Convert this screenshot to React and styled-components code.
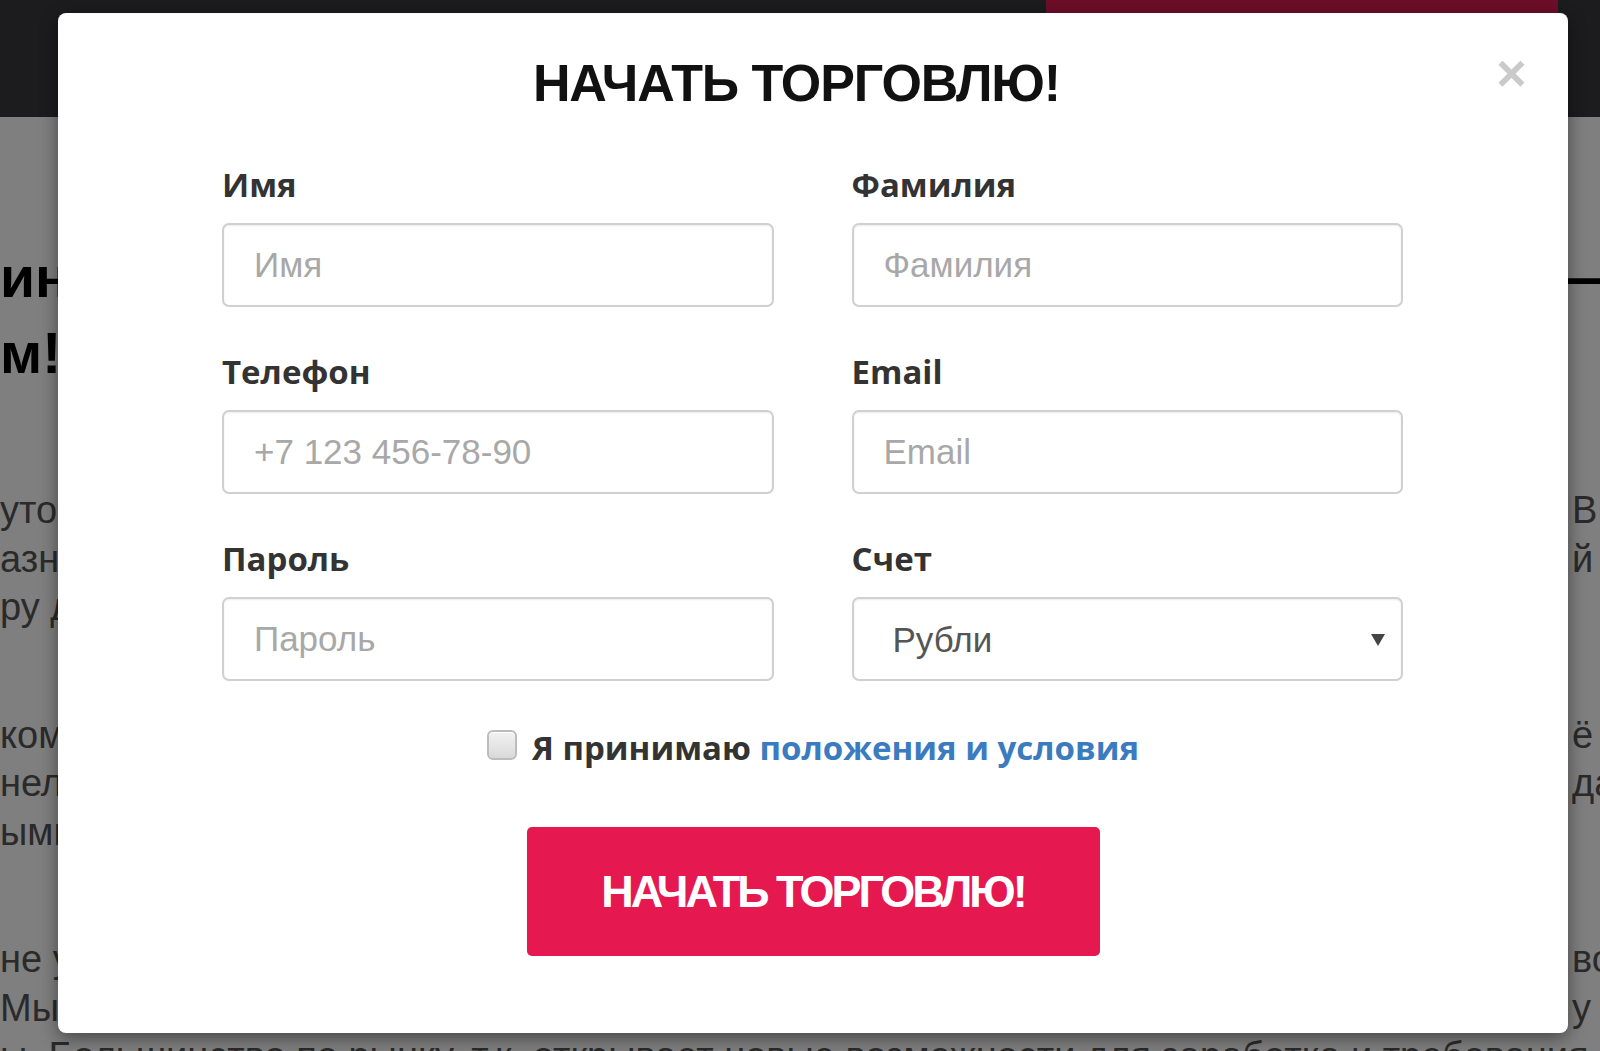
import React from "react";
import styled, { createGlobalStyle } from "styled-components";

const GlobalStyle = createGlobalStyle`
  html, body { margin: 0; padding: 0; }
  body {
    width: 1600px;
    height: 1051px;
    overflow: hidden;
    background: #fff;
    font-family: "Liberation Sans", Arial, sans-serif;
  }
  * { box-sizing: border-box; }
`;

const Page = styled.div`
  position: relative;
  width: 1600px;
  height: 1051px;
  overflow: hidden;
  background: #fff;
`;

const SiteHeader = styled.header`
  height: 117px;
  background: #38383d;
  display: flex;
  justify-content: flex-end;
  align-items: flex-start;
  padding-right: 42px;
`;

const HeaderCta = styled.div`
  width: 512px;
  height: 72px;
  background: #dc1d52;
`;

const SiteMain = styled.main`
  padding-top: 122px;
  display: flex;
  flex-direction: column;
`;

const Heading = styled.h1`
  margin: 0 0 95px;
  font: 700 57px/76px "Liberation Sans", Arial, sans-serif;
  color: #000;
`;

const Paragraph = styled.p`
  margin: 0 0 79px;
  font: 400 38px/48.5px "Liberation Sans", Arial, sans-serif;
  color: #555;
`;

const BgLine = styled.span`
  display: grid;
  grid-template-columns: ${(p) => p.$split || 1570}px 1fr;
  white-space: nowrap;
  overflow: hidden;
`;

const Backdrop = styled.div`
  position: absolute;
  inset: 0;
  background: rgba(0, 0, 0, 0.5);
`;

const Modal = styled.div`
  position: absolute;
  top: 13px;
  left: 58px;
  width: 1510px;
  background: #fff;
  border-radius: 8px;
  box-shadow: 0 5px 18px rgba(0, 0, 0, 0.45);
  padding: 40px 40px 77px;
  display: flex;
  flex-direction: column;
`;

const ModalHeader = styled.div`
  display: flex;
  align-items: flex-start;
`;

const Title = styled.h2`
  flex: 1;
  margin: 0;
  text-align: center;
  font: 700 52px/60px "Liberation Sans", Arial, sans-serif;
  letter-spacing: -1.1px;
  color: #111;
`;

const CloseButton = styled.button`
  width: 33px;
  margin-top: -5px;
  padding: 0;
  border: 0;
  background: none;
  font: 700 52px/50px "Liberation Sans", Arial, sans-serif;
  color: #cacaca;
  cursor: pointer;
`;

const FormGrid = styled.div`
  margin-top: 52px;
  padding: 0 125px 0 124px;
  display: grid;
  grid-template-columns: 1fr 1fr;
  column-gap: 78px;
  row-gap: 45px;
`;

const Field = styled.label`
  display: flex;
  flex-direction: column;
  gap: 18px;
`;

const FieldLabel = styled.span`
  font: 700 33px/40px "Open Sans", "Liberation Sans", sans-serif;
  color: #333;
`;

const TextInput = styled.input`
  width: 100%;
  height: 84px;
  margin: 0;
  border: 2px solid #d0d0d0;
  border-radius: 7px;
  padding: 0 30px;
  font: 400 35px "Liberation Sans", Arial, sans-serif;
  color: #555;
  background: #fff;
  box-shadow: inset 0 1px 2px rgba(0, 0, 0, 0.08);
  outline: none;
  &::placeholder {
    color: #a8a8a8;
  }
`;

const SelectWrap = styled.div`
  position: relative;
`;

const Select = styled.select`
  width: 100%;
  height: 84px;
  margin: 0;
  border: 2px solid #d0d0d0;
  border-radius: 7px;
  padding: 0 40px 0 39px;
  font: 400 35px "Liberation Sans", Arial, sans-serif;
  color: #555;
  background: #fff;
  box-shadow: inset 0 1px 2px rgba(0, 0, 0, 0.08);
  appearance: none;
  -webkit-appearance: none;
  outline: none;
`;

const SelectArrow = styled.span`
  position: absolute;
  right: 18px;
  top: 50%;
  margin-top: -5px;
  width: 0;
  height: 0;
  border-left: 7px solid transparent;
  border-right: 7px solid transparent;
  border-top: 12px solid #444;
  pointer-events: none;
`;

const AgreeRow = styled.label`
  margin-top: 45px;
  display: flex;
  justify-content: center;
  align-items: center;
  gap: 15px;
`;

const Checkbox = styled.input`
  appearance: none;
  -webkit-appearance: none;
  margin: -6px 0 0;
  width: 30px;
  height: 30px;
  border: 2px solid #bcbcbc;
  border-radius: 6px;
  background: linear-gradient(#f2f2f2, #d9d9d9);
  box-shadow: inset 0 1px 1px #fff;
`;

const AgreeText = styled.span`
  font: 700 33px/44px "Open Sans", "Liberation Sans", sans-serif;
  color: #333;
`;

const TermsLink = styled.a`
  color: #3b7bbf;
  text-decoration: none;
`;

const SubmitButton = styled.button`
  margin-top: 57px;
  align-self: center;
  width: 573px;
  height: 129px;
  border: 0;
  border-radius: 5px;
  background: #e5194f;
  color: #fff;
  font: 700 45px "Liberation Sans", Arial, sans-serif;
  letter-spacing: -3px;
  cursor: pointer;
`;

const bgParagraphs = [
  [
    ["уточните условия работы", "В"],
    ["азница курсов и ставок", "й з"],
    ["ру для начинающих", ""],
  ],
  [
    ["комиссия брокера", "ё"],
    ["нелегальные площадки", "да"],
    ["ыми инструментами", ""],
  ],
  [
    ["не упустите выгоду", "во"],
    ["Мы поможем вам", "у б"],
    ["ы. Большинство по рынку, т.к. открывает новые возможности для заработка и требования к торговле", ""],
  ],
];

export default function App() {
  return (
    <>
      <GlobalStyle />
      <Page>
        <SiteHeader>
          <HeaderCta />
        </SiteHeader>
        <SiteMain>
          <Heading>
            <BgLine $split={1566}>
              <span>инвестируйте с нами</span>
              <span>—</span>
            </BgLine>
            <BgLine $split={1566}>
              <span>м!</span>
              <span />
            </BgLine>
          </Heading>
          {bgParagraphs.map((lines, i) => (
            <Paragraph key={i}>
              {lines.map(([left, right], j) => (
                <BgLine key={j} $split={right ? 1572 : 1600}>
                  <span>{left}</span>
                  <span>{right}</span>
                </BgLine>
              ))}
            </Paragraph>
          ))}
        </SiteMain>
        <Backdrop />
        <Modal>
          <ModalHeader>
            <Title>НАЧАТЬ ТОРГОВЛЮ!</Title>
            <CloseButton type="button">×</CloseButton>
          </ModalHeader>
          <FormGrid>
            <Field>
              <FieldLabel>Имя</FieldLabel>
              <TextInput placeholder="Имя" />
            </Field>
            <Field>
              <FieldLabel>Фамилия</FieldLabel>
              <TextInput placeholder="Фамилия" />
            </Field>
            <Field>
              <FieldLabel>Телефон</FieldLabel>
              <TextInput placeholder="+7 123 456-78-90" />
            </Field>
            <Field>
              <FieldLabel>Email</FieldLabel>
              <TextInput placeholder="Email" />
            </Field>
            <Field>
              <FieldLabel>Пароль</FieldLabel>
              <TextInput type="password" placeholder="Пароль" />
            </Field>
            <Field>
              <FieldLabel>Счет</FieldLabel>
              <SelectWrap>
                <Select defaultValue="rub">
                  <option value="rub">Рубли</option>
                  <option value="usd">Доллары</option>
                </Select>
                <SelectArrow />
              </SelectWrap>
            </Field>
          </FormGrid>
          <AgreeRow>
            <Checkbox type="checkbox" />
            <AgreeText>
              Я принимаю <TermsLink href="#">положения и условия</TermsLink>
            </AgreeText>
          </AgreeRow>
          <SubmitButton type="button">НАЧАТЬ ТОРГОВЛЮ!</SubmitButton>
        </Modal>
      </Page>
    </>
  );
}
